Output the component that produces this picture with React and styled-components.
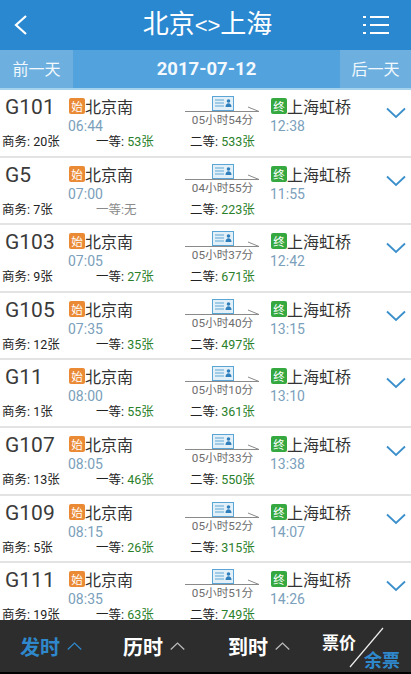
import React from 'react'
import styled, { createGlobalStyle } from 'styled-components'

const Global = createGlobalStyle`
  html, body { margin: 0; padding: 0; background: #fff; }
  body { font-family: Roboto, "Noto Sans CJK SC", sans-serif; }
`

const Page = styled.div`
  width: 411px;
  height: 674px;
  display: flex;
  flex-direction: column;
  overflow: hidden;
  background: #000;
`

const Header = styled.header`
  height: 50px;
  flex: none;
  display: flex;
  align-items: center;
  justify-content: space-between;
  padding: 0 22px 0 14px;
  background: #2a88d0;
`

const Title = styled.h1`
  margin: -3px 0 0;
  font-size: 26px;
  line-height: 46px;
  font-weight: 400;
  color: #fff;
  font-family: "Noto Sans CJK SC", sans-serif;
`

const Arrows = styled.span`
  font-family: "Liberation Sans", sans-serif;
  font-size: 22px;
`

const DateBar = styled.div`
  height: 40px;
  flex: none;
  display: flex;
  background: #51a2dd;
  border-bottom: 2px solid #a5d3ee;
  box-sizing: border-box;
`

const DayButton = styled.div`
  width: ${p => p.$width}px;
  flex: none;
  display: flex;
  align-items: center;
  justify-content: center;
  padding-bottom: 3px;
  box-sizing: border-box;
  background: #6db0e0;
  color: #f2f8fc;
  font-size: 16px;
  font-family: "Noto Sans CJK SC", sans-serif;
`

const CurrentDate = styled.div`
  flex: 1;
  text-align: center;
  line-height: 38px;
  color: #f4f9fd;
  font-size: 18.5px;
  font-weight: 700;
`

const List = styled.div`
  flex: 1;
  min-height: 0;
  overflow: hidden;
  background: #fff;
`

const Row = styled.div`
  height: 67.6px;
  box-sizing: border-box;
  border-bottom: 2px solid #e3e3e3;
  position: relative;
`

const Main = styled.div`
  height: 43px;
  display: flex;
`

const TrainNo = styled.div`
  width: 69px;
  flex: none;
  padding: 5px 0 0 5px;
  box-sizing: border-box;
  font-size: 21px;
  line-height: 24px;
  color: #3a3a3a;
`

const Stop = styled.div`
  width: ${p => p.$width}px;
  flex: none;
  padding-top: 6px;
  box-sizing: border-box;
`

const StopName = styled.div`
  display: flex;
  align-items: center;
  height: 20px;
  font-size: 16px;
  color: #333;
  font-family: "Noto Sans CJK SC", sans-serif;
`

const Badge = styled.span`
  width: 16px;
  height: 16px;
  flex: none;
  border-radius: 2px;
  background: ${p => p.$color};
  color: #fff;
  font-size: 11.5px;
  line-height: 16px;
  text-align: center;
`

const StopTime = styled.div`
  font-size: 14px;
  line-height: 16px;
  margin: 2px 0 0 -1px;
  color: #7ba0bb;
`

const Route = styled.div`
  width: 85px;
  flex: none;
  margin-right: 6px;
  display: flex;
  flex-direction: column;
  align-items: center;
  padding-top: 6px;
  box-sizing: border-box;
`

const RouteLine = styled.svg`
  display: block;
  margin-top: -5px;
`

const Duration = styled.div`
  font-size: 11.7px;
  line-height: 12px;
  margin-top: 2px;
  color: #6d6d6d;
  white-space: nowrap;
`

const Expand = styled.svg`
  position: absolute;
  right: 5px;
  top: 17px;
`

const Tickets = styled.div`
  display: flex;
  padding-left: 2px;
`

const Ticket = styled.div`
  width: 94px;
  flex: none;
  font-size: 12.5px;
  line-height: 17px;
  white-space: nowrap;
  color: ${p => p.$muted ? '#8a8a8a' : '#222'};
`

const Count = styled.span`
  color: ${p => p.$plain ? '#222' : '#2a7f2a'};
`

const SortBar = styled.footer`
  height: 52px;
  flex: none;
  margin-bottom: 2px;
  background: #2d2d2d;
  display: flex;
  align-items: center;
  padding-left: 20px;
  color: #fff;
`

const SortItem = styled.div`
  width: ${p => p.$width}px;
  flex: none;
  display: flex;
  align-items: center;
  gap: 7px;
  font-size: 20px;
  font-weight: 700;
  color: ${p => p.$active ? '#2f88cc' : '#fff'};
  font-family: "Noto Sans CJK SC", sans-serif;
`

const PriceToggle = styled.div`
  flex: 1;
  position: relative;
  align-self: stretch;
  font-family: "Noto Sans CJK SC", sans-serif;
  font-weight: 700;
`

const Price = styled.span`
  position: absolute;
  left: 0;
  top: 10px;
  font-size: 17px;
  line-height: 24px;
`

const Remain = styled.span`
  position: absolute;
  left: 42px;
  top: 27px;
  font-size: 18px;
  line-height: 24px;
  color: #2f88cc;
`

const Slash = styled.svg`
  position: absolute;
  left: 27px;
  top: 7px;
`

const trains = [
  ['G101', '06:44', '05小时54分', '12:38', '20张', '53张', '533张'],
  ['G5', '07:00', '04小时55分', '11:55', '7张', null, '223张'],
  ['G103', '07:05', '05小时37分', '12:42', '9张', '27张', '671张'],
  ['G105', '07:35', '05小时40分', '13:15', '12张', '35张', '497张'],
  ['G11', '08:00', '05小时10分', '13:10', '1张', '55张', '361张'],
  ['G107', '08:05', '05小时33分', '13:38', '13张', '46张', '550张'],
  ['G109', '08:15', '05小时52分', '14:07', '5张', '26张', '315张'],
  ['G111', '08:35', '05小时51分', '14:26', '19张', '63张', '749张'],
]

function TicketIcon() {
  return (
    <svg width="22" height="15" viewBox="0 0 22 15">
      <rect x="0.5" y="0.5" width="21" height="14" fill="#e4f0f8" stroke="#5aa5d6" />
      <path d="M3 4h9M3 7h9M3 10h9" stroke="#5aa5d6" strokeWidth="1.2" />
      <circle cx="16.5" cy="5" r="1.8" fill="#2f7fbd" />
      <path d="M13.5 11c0-5 6-5 6 0z" fill="#2f7fbd" />
    </svg>
  )
}

function Chevron({ up, size = 22, color }) {
  const h = size * 0.55
  return (
    <svg width={size} height={h} viewBox="0 0 20 11" style={{ display: 'block' }}>
      <path d={up ? 'M1 10L10 1.5L19 10' : 'M1 1L10 9.5L19 1'} fill="none" stroke={color} strokeWidth="1.7" />
    </svg>
  )
}

function TrainRow({ train }) {
  const [no, dep, dur, arr, biz, first, second] = train
  return (
    <Row>
      <Main>
        <TrainNo>{no}</TrainNo>
        <Stop $width={111}>
          <StopName><Badge $color="#ea8a35">始</Badge>北京南</StopName>
          <StopTime>{dep}</StopTime>
        </Stop>
        <Route>
          <TicketIcon />
          <RouteLine width="75" height="6" viewBox="0 0 75 6">
            <path d="M0 5.5H74L63 1" fill="none" stroke="#8a8a8a" strokeWidth="1" />
          </RouteLine>
          <Duration>{dur}</Duration>
        </Route>
        <Stop $width={110}>
          <StopName><Badge $color="#35a83f">终</Badge>上海虹桥</StopName>
          <StopTime>{arr}</StopTime>
        </Stop>
      </Main>
      <Expand width="20" height="12" viewBox="0 0 20 11">
        <path d="M1 1L10 9.5L19 1" fill="none" stroke="#3b8fcb" strokeWidth="1.8" />
      </Expand>
      <Tickets>
        <Ticket>商务: <Count $plain>{biz}</Count></Ticket>
        {first
          ? <Ticket>一等: <Count>{first}</Count></Ticket>
          : <Ticket $muted>一等:无</Ticket>}
        <Ticket>二等: <Count>{second}</Count></Ticket>
      </Tickets>
    </Row>
  )
}

export default function App() {
  return (
    <Page>
      <Global />
      <Header>
        <svg width="38" height="22" viewBox="0 0 38 22">
          <path d="M12 2L2 11L12 20" fill="none" stroke="#fff" strokeWidth="2.2" />
        </svg>
        <Title>北京<Arrows>&lt;&gt;</Arrows>上海</Title>
        <svg width="26" height="22" viewBox="0 0 26 22">
          <path d="M7 3H26M7 11H26M7 19H26" stroke="#fff" strokeWidth="2.2" />
          <path d="M0 3H3M0 11H3M0 19H3" stroke="#fff" strokeWidth="2.2" />
        </svg>
      </Header>
      <DateBar>
        <DayButton $width={73}>前一天</DayButton>
        <CurrentDate>2017-07-12</CurrentDate>
        <DayButton $width={71}>后一天</DayButton>
      </DateBar>
      <List>
        {trains.map(t => <TrainRow key={t[0]} train={t} />)}
      </List>
      <SortBar>
        <SortItem $width={103} $active>发时<Chevron up size={15} color="#2f88cc" /></SortItem>
        <SortItem $width={105}>历时<Chevron up size={15} color="#bbb" /></SortItem>
        <SortItem $width={94}>到时<Chevron up size={15} color="#bbb" /></SortItem>
        <PriceToggle>
          <Price>票价</Price>
          <Slash width="35" height="41" viewBox="0 0 35 41">
            <path d="M1 40L34 1" stroke="#eee" strokeWidth="1.2" />
          </Slash>
          <Remain>余票</Remain>
        </PriceToggle>
      </SortBar>
    </Page>
  )
}
